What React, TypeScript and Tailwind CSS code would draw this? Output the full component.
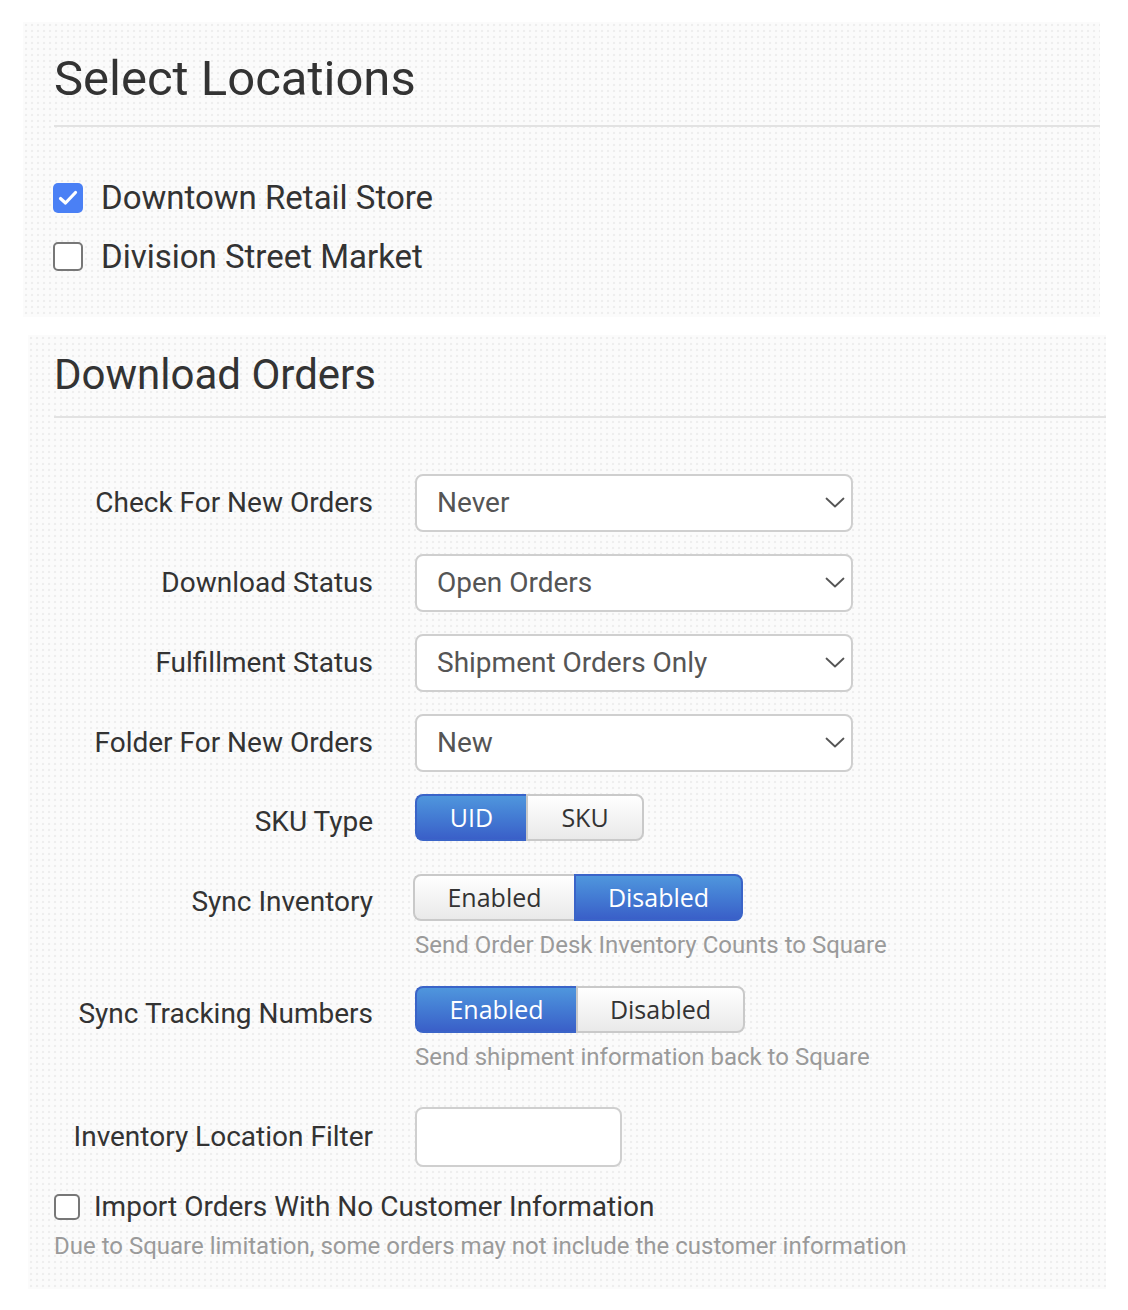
import React from "react";

const panelBg =
  "bg-[#fbfbfb] bg-[radial-gradient(circle,#eeeeee_1.2px,transparent_1.6px)] bg-[length:6px_6px]";

function Chevron() {
  return (
    <svg width="20" height="12" viewBox="0 0 20 12" fill="none">
      <path d="M1.5 1.5 L10 9.5 L18.5 1.5" stroke="#555" strokeWidth="1.8" strokeLinecap="round" strokeLinejoin="round" />
    </svg>
  );
}

function SelectBox({ value }: { value: string }) {
  return (
    <div className="flex h-[58px] w-[438px] items-center justify-between rounded-[8px] border-2 border-[#cfcfcf] bg-white pl-[20px] pr-[6px]">
      <span className="text-[28px] text-[#555]">{value}</span>
      <Chevron />
    </div>
  );
}

function Toggle({
  left,
  right,
  active,
  leftW,
  rightW,
}: {
  left: string;
  right: string;
  active: "left" | "right";
  leftW: string;
  rightW: string;
}) {
  const on =
    "bg-gradient-to-b from-[#4f96dd] to-[#3a5fc8] text-white border-[#3a64c8]";
  const off =
    "bg-gradient-to-b from-white to-[#e9e9e9] text-[#333] border-[#c9c9c9]";
  return (
    <div className="flex h-[47px] font-['Open_Sans',sans-serif] text-[25px]">
      <div
        className={`${leftW} flex items-center justify-center rounded-l-[8px] border-2 border-r-0 ${
          active === "left" ? on : off
        }`}
      >
        {left}
      </div>
      <div
        className={`${rightW} flex items-center justify-center rounded-r-[8px] border-2 ${
          active === "right" ? on : off
        }`}
      >
        {right}
      </div>
    </div>
  );
}

function Row({
  label,
  children,
  labelClass = "",
}: {
  label: string;
  children: React.ReactNode;
  labelClass?: string;
}) {
  return (
    <div className="flex items-start">
      <div className={`w-[345px] shrink-0 text-right text-[28px] text-[#333] ${labelClass}`}>{label}</div>
      <div className="ml-[42px]">{children}</div>
    </div>
  );
}

export default function App() {
  return (
    <div className="min-h-[1310px] w-[1128px] bg-white font-['Roboto',sans-serif] text-[#333]">
      <div className="h-[22px]" />
      {/* Select Locations panel */}
      <div className={`ml-[23px] h-[295px] w-[1077px] ${panelBg}`}>
        <div className="pl-[31px] pt-[26px]">
          <h1 className="text-[49px] leading-[62px] text-[#333]">Select Locations</h1>
          <div className="mt-[15px] h-[2px] bg-[#e2e2e2]" />
        </div>
        <div className="mt-[55px] flex flex-col gap-[28px] pl-[30px]">
          <div className="flex h-[31px] items-center">
            <div className="flex h-[30px] w-[30px] items-center justify-center rounded-[5px] bg-[#4a80f5]">
              <svg width="20" height="16" viewBox="0 0 20 16" fill="none">
                <path d="M2.5 8.5 L7.5 13 L17.5 2.5" stroke="white" strokeWidth="3.2" strokeLinecap="round" strokeLinejoin="round" />
              </svg>
            </div>
            <span className="ml-[18px] text-[33px] text-[#333]">Downtown Retail Store</span>
          </div>
          <div className="flex h-[31px] items-center">
            <div className="h-[29px] w-[30px] rounded-[5px] border-2 border-[#777] bg-white" />
            <span className="ml-[18px] text-[33px] text-[#333]">Division Street Market</span>
          </div>
        </div>
      </div>

      <div className="h-[18px]" />

      {/* Download Orders panel */}
      <div className={`ml-[28px] h-[954px] w-[1078px] ${panelBg}`}>
        <div className="pl-[26px] pt-[14px]">
          <h2 className="text-[42px] leading-[52px] text-[#333]">Download Orders</h2>
          <div className="mt-[15px] h-[2px] bg-[#e2e2e2]" />
        </div>

        <div className="mt-[56px] flex flex-col">
          <Row label="Check For New Orders" labelClass="leading-[58px]">
            <SelectBox value="Never" />
          </Row>
          <div className="h-[22px]" />
          <Row label="Download Status" labelClass="leading-[58px]">
            <SelectBox value="Open Orders" />
          </Row>
          <div className="h-[22px]" />
          <Row label="Fulfillment Status" labelClass="leading-[58px]">
            <SelectBox value="Shipment Orders Only" />
          </Row>
          <div className="h-[22px]" />
          <Row label="Folder For New Orders" labelClass="leading-[58px]">
            <SelectBox value="New" />
          </Row>
          <div className="h-[22px]" />
          <Row label="SKU Type" labelClass="h-[47px] leading-[56px]">
            <Toggle left="UID" right="SKU" active="left" leftW="w-[111px]" rightW="w-[118px]" />
          </Row>
          <div className="h-[33px]" />
          <Row label="Sync Inventory" labelClass="h-[47px] leading-[56px]">
            <div className="-ml-[2px]">
              <Toggle left="Enabled" right="Disabled" active="right" leftW="w-[161px]" rightW="w-[169px]" />
            </div>
            <div className="mt-[10px] text-[24px] leading-[28px] text-[#9a9a9a]">
              Send Order Desk Inventory Counts to Square
            </div>
          </Row>
          <div className="h-[27px]" />
          <Row label="Sync Tracking Numbers" labelClass="h-[47px] leading-[56px]">
            <Toggle left="Enabled" right="Disabled" active="left" leftW="w-[161px]" rightW="w-[169px]" />
            <div className="mt-[10px] text-[24px] leading-[28px] text-[#9a9a9a]">
              Send shipment information back to Square
            </div>
          </Row>
          <div className="h-[36px]" />
          <Row label="Inventory Location Filter" labelClass="leading-[60px]">
            <div className="h-[60px] w-[207px] rounded-[8px] border-2 border-[#cfcfcf] bg-white" />
          </Row>
          <div className="mt-[24px] flex items-center pl-[26px]">
            <div className="h-[26px] w-[26px] rounded-[5px] border-2 border-[#777] bg-white" />
            <span className="ml-[14px] text-[28px] leading-[32px] text-[#333]">
              Import Orders With No Customer Information
            </span>
          </div>
          <div className="mt-[8px] pl-[26px] text-[24px] leading-[30px] text-[#9a9a9a]">
            Due to Square limitation, some orders may not include the customer information
          </div>
        </div>
      </div>
    </div>
  );
}
